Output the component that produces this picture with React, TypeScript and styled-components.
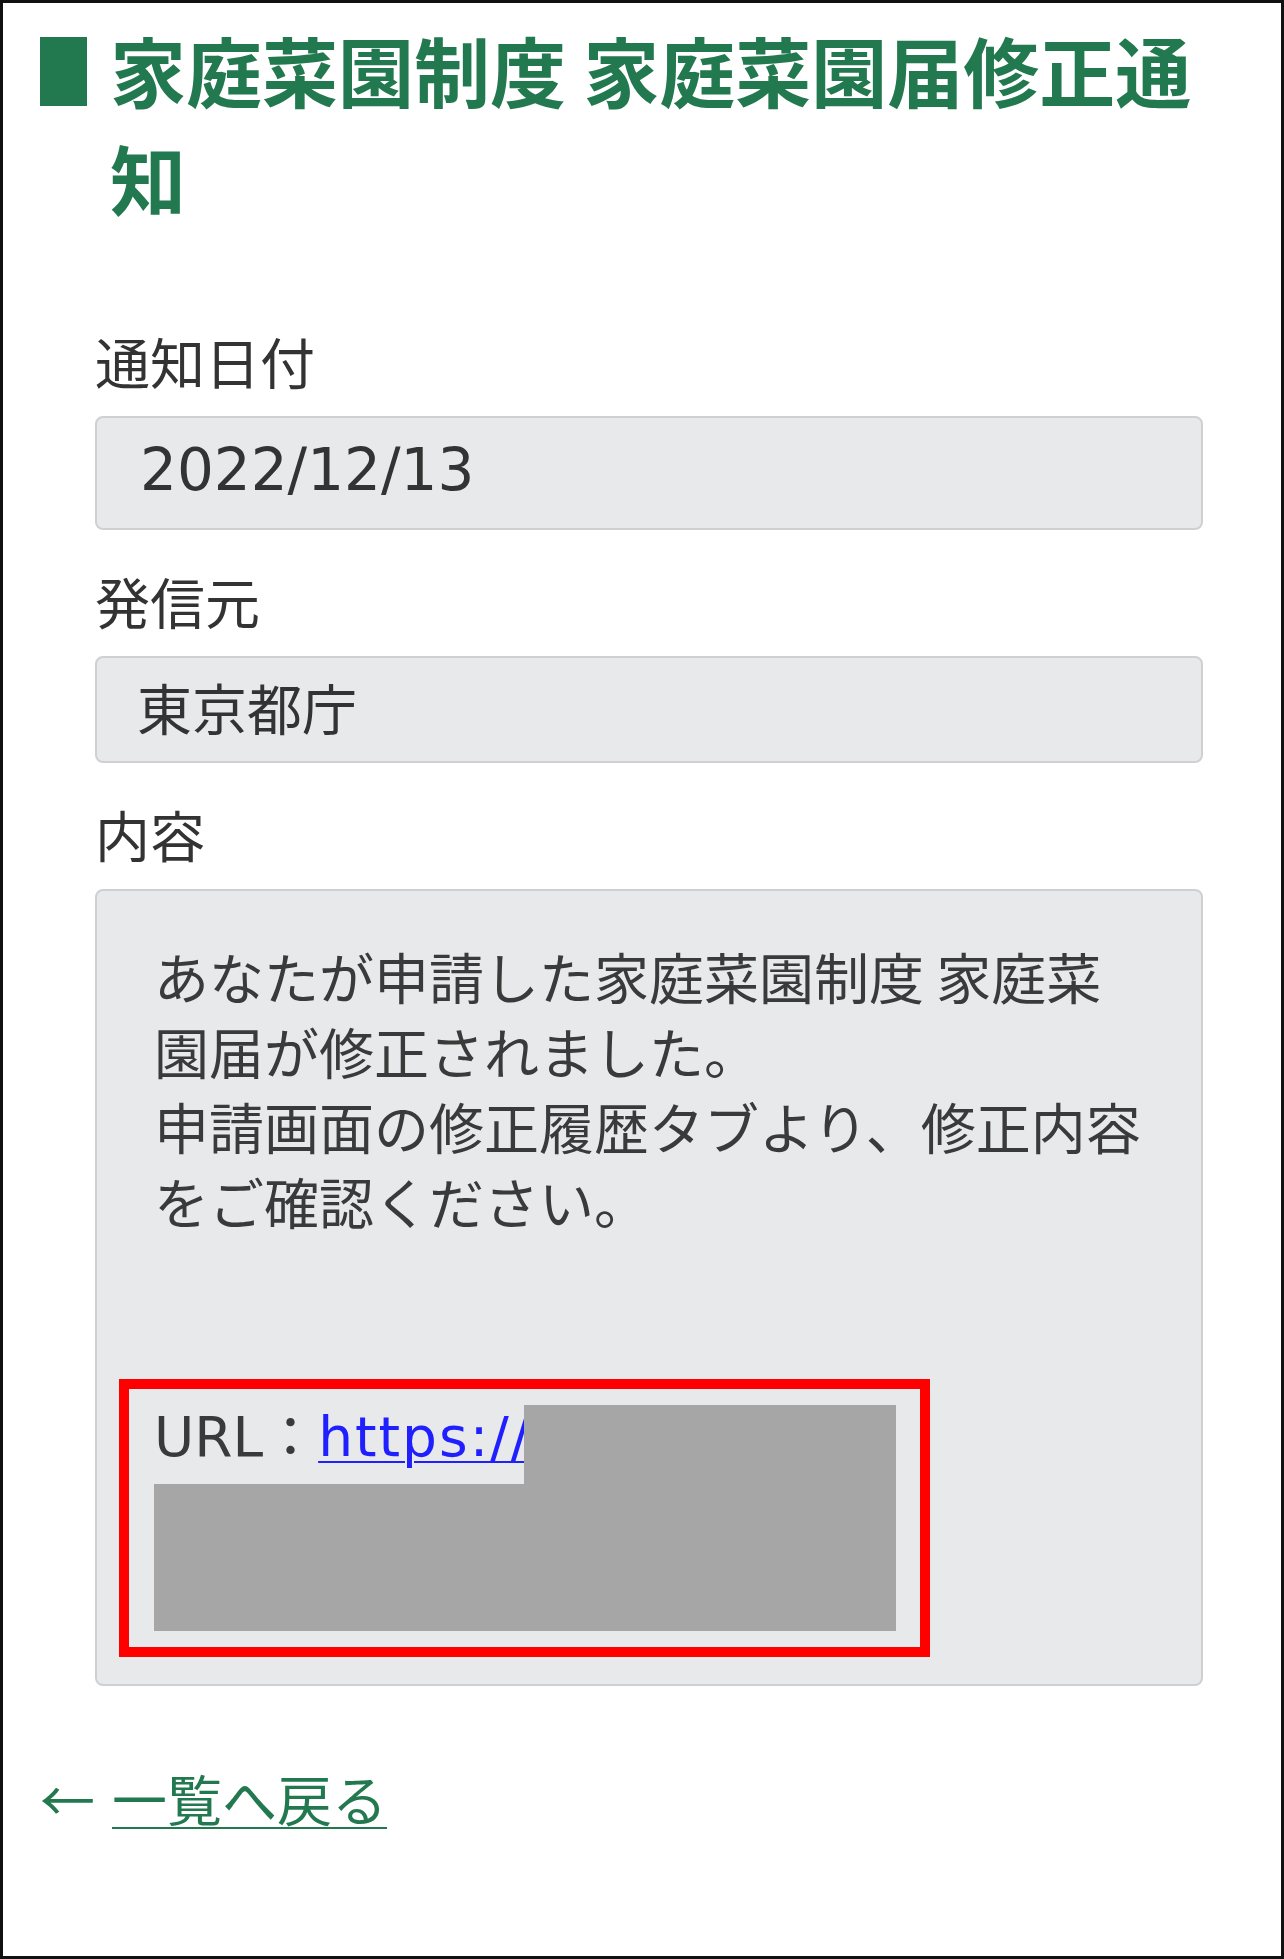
import styled, { createGlobalStyle } from 'styled-components';

const GlobalStyle = createGlobalStyle`
	html,
	body {
		margin: 0;
		padding: 0;
		background: #ffffff;
	}
	body {
		font-family: 'Noto Sans CJK JP', 'Noto Sans', sans-serif;
		color: #333333;
	}
`;

const Frame = styled.div`
	box-sizing: border-box;
	width: 1284px;
	height: 1959px;
	border: 3px solid #111111;
	padding: 12px 37px 0 37px;
	background: #ffffff;
`;

const TitleRow = styled.div`
	display: flex;
	align-items: flex-start;
	gap: 23px;
`;

const TitleBar = styled.span`
	flex-shrink: 0;
	width: 47px;
	height: 69px;
	margin-top: 22px;
	background: #23794f;
`;

const Title = styled.h1`
	margin: 0;
	font-size: 76px;
	line-height: 108px;
	font-weight: 700;
	color: #23794f;
`;

const Fields = styled.div`
	margin: 92px 41px 0 55px;
	display: flex;
	flex-direction: column;
`;

const Field = styled.div`
	display: flex;
	flex-direction: column;
	& + & {
		margin-top: 33px;
	}
`;

const Label = styled.label`
	font-size: 55px;
	line-height: 75px;
	margin-bottom: 18px;
	color: #333333;
`;

const ReadOnlyBox = styled.div<{ $height: number }>`
	box-sizing: border-box;
	height: ${(p) => p.$height}px;
	display: flex;
	align-items: center;
	padding: 0 0 6px 40px;
	border: 2px solid #cfd0d3;
	border-radius: 8px;
	background: #e8e9eb;
	font-size: 55px;
	line-height: 75px;
	color: #333333;
`;

// Latin text in the original is rendered with Verdana-like glyphs
const DateText = styled.span`
	margin-left: 3px;
	font-family: 'DejaVu Sans', 'Noto Sans CJK JP', sans-serif;
	font-size: 58px;
`;

const ContentBox = styled.div`
	box-sizing: border-box;
	padding: 47px 52px 27px 57px;
	border: 2px solid #cfd0d3;
	border-radius: 8px;
	background: #e8e9eb;
	font-size: 55px;
	line-height: 75px;
	color: #3a3a3a;
`;

const Message = styled.p`
	margin: 0;
	word-break: break-all;
`;

const Annotation = styled.div`
	position: relative;
	box-sizing: border-box;
	width: 811px;
	height: 278px;
	margin: 141px 0 0 -35px;
	padding: 11px 23px 0 25px;
	border: 10px solid #ff0000;
`;

const UrlLine = styled.p`
	margin: 0;
	font-family: 'DejaVu Sans', 'Noto Sans CJK JP', sans-serif;
	white-space: nowrap;
`;

const UrlLink = styled.a`
	color: #2020ff;
	letter-spacing: 2px;
	text-decoration: underline;
	text-decoration-thickness: 2px;
	text-underline-offset: 5px;
`;

const Redaction = styled.span<{ $left: number; $top: number; $width: number; $height: number }>`
	position: absolute;
	left: ${(p) => p.$left}px;
	top: ${(p) => p.$top}px;
	width: ${(p) => p.$width}px;
	height: ${(p) => p.$height}px;
	background: #a6a6a6;
`;

const BackRow = styled.div`
	margin-top: 74px;
	font-size: 55px;
	line-height: 75px;
	color: #23794f;
`;

const Arrow = styled.span`
	margin-right: 17px;
`;

const BackLink = styled.a`
	color: #23794f;
	text-decoration: underline;
	text-decoration-thickness: 2px;
	text-underline-offset: 6px;
`;

const App = () => {
	return (
		<>
			<GlobalStyle />
			<Frame>
				<TitleRow>
					<TitleBar />
					<Title>家庭菜園制度 家庭菜園届修正通知</Title>
				</TitleRow>
				<Fields>
					<Field>
						<Label>通知日付</Label>
						<ReadOnlyBox $height={114}>
							<DateText>2022/12/13</DateText>
						</ReadOnlyBox>
					</Field>
					<Field>
						<Label>発信元</Label>
						<ReadOnlyBox $height={107}>東京都庁</ReadOnlyBox>
					</Field>
					<Field>
						<Label>内容</Label>
						<ContentBox>
							<Message>
								あなたが申請した家庭菜園制度 家庭菜園届が修正されました。
								<br />
								申請画面の修正履歴タブより、修正内容をご確認ください。
							</Message>
							<Annotation>
								<UrlLine>
									URL：<UrlLink href="#">https://example.jp/</UrlLink>
								</UrlLine>
								<Redaction $left={395} $top={16} $width={372} $height={226} />
								<Redaction $left={25} $top={95} $width={742} $height={147} />
							</Annotation>
						</ContentBox>
					</Field>
				</Fields>
				<BackRow>
					<Arrow>←</Arrow>
					<BackLink href="#">一覧へ戻る</BackLink>
				</BackRow>
			</Frame>
		</>
	);
};

export default App;
